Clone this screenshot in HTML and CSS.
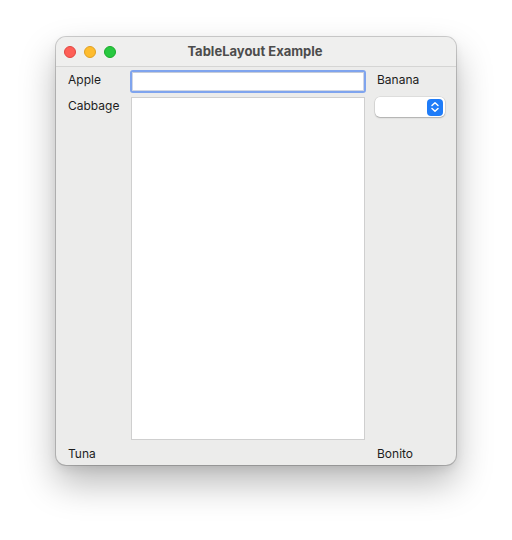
FILE: index.html
```html
<!DOCTYPE html>
<html>
<head>
<meta charset="utf-8">
<link rel="stylesheet" href="styles.css">
</head>
<body>
<div class="window">
  <div class="titlebar">
    <div class="lights">
      <span class="light red"></span>
      <span class="light yellow"></span>
      <span class="light green"></span>
    </div>
    <div class="title">TableLayout Example</div>
  </div>
  <div class="content">
    <div class="label l-apple">Apple</div>
    <div class="field"><div class="field-inner"></div></div>
    <div class="label l-banana">Banana</div>
    <div class="label l-cabbage">Cabbage</div>
    <div class="textarea"></div>
    <div class="popup-cell">
      <div class="popup">
        <span class="popup-btn">
          <svg width="10" height="12" viewBox="0 0 10 12"><path d="M2 4.5 L5 1.8 L8 4.5 M2 7.5 L5 10.2 L8 7.5" fill="none" stroke="#fff" stroke-width="1.5" stroke-linecap="round" stroke-linejoin="round"/></svg>
        </span>
      </div>
    </div>
    <div class="label l-tuna">Tuna</div>
    <div></div>
    <div class="label l-bonito">Bonito</div>
  </div>
</div>
</body>
</html>
```
FILE: styles.css
```css
html, body {
  margin: 0;
  background: #ffffff;
}
body {
  width: 512px;
  height: 540px;
  padding: 37px 0 0 56px;
  box-sizing: border-box;
  font-family: "Inter", "Liberation Sans", sans-serif;
}
.window {
  width: 400px;
  height: 428px;
  box-sizing: border-box;
  border-radius: 10px;
  background: #ececeb;
  box-shadow: 0 0 0 1px rgba(0,0,0,0.18), 0 18px 36px rgba(0,0,0,0.28), 0 4px 10px rgba(0,0,0,0.08);
  overflow: hidden;
  display: flex;
  flex-direction: column;
}
.titlebar {
  height: 29px;
  flex: none;
  background: #efefee;
  border-bottom: 1px solid #d5d5d4;
  display: flex;
  align-items: center;
  position: relative;
}
.lights {
  display: flex;
  gap: 8px;
  padding-left: 8px;
  padding-top: 1px;
}
.light {
  width: 12px;
  height: 12px;
  border-radius: 50%;
  box-sizing: border-box;
}
.red { background: #fe5f57; border: 0.5px solid #e14640; }
.yellow { background: #febc2e; border: 0.5px solid #dfa023; }
.green { background: #28c840; border: 0.5px solid #1aab29; }
.title {
  position: absolute;
  left: 0;
  right: 0;
  top: 6px;
  text-align: center;
  font-size: 13px;
  font-weight: 700;
  color: #4c4c4c;
  transform: translateX(-1px);
}
.content {
  display: grid;
  grid-template-columns: 53px 236px 70px;
  grid-template-rows: 23px 343px 1fr;
  column-gap: 9px;
  row-gap: 4px;
  padding: 3px 0 0 12px;
  flex: 1;
  font-size: 12px;
  color: #1d1d1d;
}
.label {
  line-height: 16px;
  white-space: nowrap;
}
.l-apple, .l-banana { padding-top: 2px; }
.l-cabbage { padding-top: 1px; }
.l-banana, .l-bonito { padding-left: 2px; }
.l-tuna, .l-bonito { padding-top: 2px; }
.field {
  border: 2px solid #7fa4ee;
  border-radius: 3px;
  background: #fff;
  box-sizing: border-box;
}
.field-inner {
  height: 100%;
  box-sizing: border-box;
  border: 1px solid #d0d6e4;
  border-top-color: #c6ccd8;
}
.textarea {
  background: #fff;
  border: 1px solid #cfcfcf;
  margin-left: 1px;
  margin-right: 1px;
}
.popup {
  width: 70px;
  height: 20px;
  box-sizing: border-box;
  background: #fff;
  border-radius: 5px;
  box-shadow: 0 0 0 0.5px rgba(0,0,0,0.12), 0 1px 1.5px rgba(0,0,0,0.22);
  display: flex;
  justify-content: flex-end;
  align-items: center;
  padding-right: 2px;
}
.popup-btn {
  width: 16px;
  height: 17px;
  border-radius: 4px;
  background: #1f7cf8;
  display: flex;
  align-items: center;
  justify-content: center;
}
.popup-btn svg { display: block; }
```
